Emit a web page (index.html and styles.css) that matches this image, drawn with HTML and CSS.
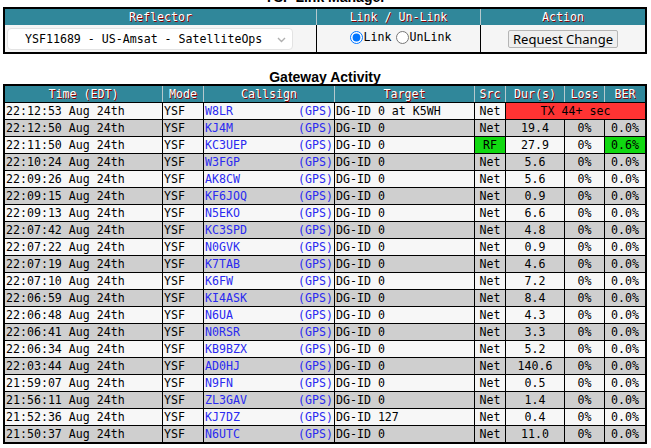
FILE: index.html
```html
<!DOCTYPE html>
<html>
<head>
<meta charset="utf-8">
<link rel="stylesheet" href="styles.css">
</head>
<body>
<div class="page">
  <div class="title title-top">YSF Link Manager</div>
  <table class="grid link-table">
    <thead>
      <tr>
        <th class="c-refl">Reflector</th>
        <th class="c-link">Link / Un-Link</th>
        <th class="c-act">Action</th>
      </tr>
    </thead>
    <tbody>
      <tr>
        <td class="refl-cell">
          <div class="select-wrap">
            <select class="refl-select"><option>YSF11689 - US-Amsat - SatelliteOps</option></select>
            <svg class="chev" width="9" height="6" viewBox="0 0 9 6"><path d="M1 1 L4.5 4.5 L8 1" fill="none" stroke="#b0b0b0" stroke-width="1.4"/></svg>
          </div>
        </td>
        <td class="center">
          <label class="radio"><input type="radio" name="lk" checked>Link</label><label class="radio"><input type="radio" name="lk">UnLink</label>
        </td>
        <td class="center"><button class="btn">Request Change</button></td>
      </tr>
    </tbody>
  </table>

  <div class="title title-gw">Gateway Activity</div>
  <table class="grid gw-table">
    <thead>
      <tr>
        <th class="w-time">Time (EDT)</th>
        <th class="w-mode">Mode</th>
        <th class="w-call">Callsign</th>
        <th class="w-tgt">Target</th>
        <th class="w-src">Src</th>
        <th class="w-dur">Dur(s)</th>
        <th class="w-loss">Loss</th>
        <th class="w-ber">BER</th>
      </tr>
    </thead>
    <tbody>
      <tr class="odd"><td>22:12:53 Aug 24th</td><td>YSF</td><td class="call"><span class="gps">(GPS)</span>W8LR</td><td>DG-ID 0 at K5WH</td><td class="center">Net</td><td class="center red" colspan="3">TX 44+ sec</td></tr>
      <tr class="even"><td>22:12:50 Aug 24th</td><td>YSF</td><td class="call"><span class="gps">(GPS)</span>KJ4M</td><td>DG-ID 0</td><td class="center">Net</td><td class="center">19.4</td><td class="center">0%</td><td class="center">0.0%</td></tr>
      <tr class="odd"><td>22:11:50 Aug 24th</td><td>YSF</td><td class="call"><span class="gps">(GPS)</span>KC3UEP</td><td>DG-ID 0</td><td class="center green">RF</td><td class="center">27.9</td><td class="center">0%</td><td class="center green">0.6%</td></tr>
      <tr class="even"><td>22:10:24 Aug 24th</td><td>YSF</td><td class="call"><span class="gps">(GPS)</span>W3FGP</td><td>DG-ID 0</td><td class="center">Net</td><td class="center">5.6</td><td class="center">0%</td><td class="center">0.0%</td></tr>
      <tr class="odd"><td>22:09:26 Aug 24th</td><td>YSF</td><td class="call"><span class="gps">(GPS)</span>AK8CW</td><td>DG-ID 0</td><td class="center">Net</td><td class="center">5.6</td><td class="center">0%</td><td class="center">0.0%</td></tr>
      <tr class="even"><td>22:09:15 Aug 24th</td><td>YSF</td><td class="call"><span class="gps">(GPS)</span>KF6JOQ</td><td>DG-ID 0</td><td class="center">Net</td><td class="center">0.9</td><td class="center">0%</td><td class="center">0.0%</td></tr>
      <tr class="odd"><td>22:09:13 Aug 24th</td><td>YSF</td><td class="call"><span class="gps">(GPS)</span>N5EKO</td><td>DG-ID 0</td><td class="center">Net</td><td class="center">6.6</td><td class="center">0%</td><td class="center">0.0%</td></tr>
      <tr class="even"><td>22:07:42 Aug 24th</td><td>YSF</td><td class="call"><span class="gps">(GPS)</span>KC3SPD</td><td>DG-ID 0</td><td class="center">Net</td><td class="center">4.8</td><td class="center">0%</td><td class="center">0.0%</td></tr>
      <tr class="odd"><td>22:07:22 Aug 24th</td><td>YSF</td><td class="call"><span class="gps">(GPS)</span>N0GVK</td><td>DG-ID 0</td><td class="center">Net</td><td class="center">0.9</td><td class="center">0%</td><td class="center">0.0%</td></tr>
      <tr class="even"><td>22:07:19 Aug 24th</td><td>YSF</td><td class="call"><span class="gps">(GPS)</span>K7TAB</td><td>DG-ID 0</td><td class="center">Net</td><td class="center">4.6</td><td class="center">0%</td><td class="center">0.0%</td></tr>
      <tr class="odd"><td>22:07:10 Aug 24th</td><td>YSF</td><td class="call"><span class="gps">(GPS)</span>K6FW</td><td>DG-ID 0</td><td class="center">Net</td><td class="center">7.2</td><td class="center">0%</td><td class="center">0.0%</td></tr>
      <tr class="even"><td>22:06:59 Aug 24th</td><td>YSF</td><td class="call"><span class="gps">(GPS)</span>KI4ASK</td><td>DG-ID 0</td><td class="center">Net</td><td class="center">8.4</td><td class="center">0%</td><td class="center">0.0%</td></tr>
      <tr class="odd"><td>22:06:48 Aug 24th</td><td>YSF</td><td class="call"><span class="gps">(GPS)</span>N6UA</td><td>DG-ID 0</td><td class="center">Net</td><td class="center">4.3</td><td class="center">0%</td><td class="center">0.0%</td></tr>
      <tr class="even"><td>22:06:41 Aug 24th</td><td>YSF</td><td class="call"><span class="gps">(GPS)</span>N0RSR</td><td>DG-ID 0</td><td class="center">Net</td><td class="center">3.3</td><td class="center">0%</td><td class="center">0.0%</td></tr>
      <tr class="odd"><td>22:06:34 Aug 24th</td><td>YSF</td><td class="call"><span class="gps">(GPS)</span>KB9BZX</td><td>DG-ID 0</td><td class="center">Net</td><td class="center">5.2</td><td class="center">0%</td><td class="center">0.0%</td></tr>
      <tr class="even"><td>22:03:44 Aug 24th</td><td>YSF</td><td class="call"><span class="gps">(GPS)</span>AD0HJ</td><td>DG-ID 0</td><td class="center">Net</td><td class="center">140.6</td><td class="center">0%</td><td class="center">0.0%</td></tr>
      <tr class="odd"><td>21:59:07 Aug 24th</td><td>YSF</td><td class="call"><span class="gps">(GPS)</span>N9FN</td><td>DG-ID 0</td><td class="center">Net</td><td class="center">0.5</td><td class="center">0%</td><td class="center">0.0%</td></tr>
      <tr class="even"><td>21:56:11 Aug 24th</td><td>YSF</td><td class="call"><span class="gps">(GPS)</span>ZL3GAV</td><td>DG-ID 0</td><td class="center">Net</td><td class="center">1.4</td><td class="center">0%</td><td class="center">0.0%</td></tr>
      <tr class="odd"><td>21:52:36 Aug 24th</td><td>YSF</td><td class="call"><span class="gps">(GPS)</span>KJ7DZ</td><td>DG-ID 127</td><td class="center">Net</td><td class="center">0.4</td><td class="center">0%</td><td class="center">0.0%</td></tr>
      <tr class="even"><td>21:50:37 Aug 24th</td><td>YSF</td><td class="call"><span class="gps">(GPS)</span>N6UTC</td><td>DG-ID 0</td><td class="center">Net</td><td class="center">11.0</td><td class="center">0%</td><td class="center">0.0%</td></tr>
    </tbody>
  </table>
</div>
</body>
</html>
```

FILE: styles.css
```css
html, body {
  margin: 0;
  padding: 0;
  background: #ffffff;
}

.page {
  padding: 0 4px 0 3px;
  overflow: hidden;
  height: 448px;
}

.title {
  font-family: "Liberation Sans", Arial, sans-serif;
  font-weight: bold;
  font-size: 14px;
  line-height: 16px;
  text-align: center;
  color: #000;
}

.title-top {
  margin-top: -11px;
  margin-bottom: 2px;
}

.title-gw {
  margin-top: 15px;
  margin-bottom: -1px;
}

.grid {
  width: 644px;
  border: 2px solid #000;
  border-collapse: separate;
  border-spacing: 0;
  table-layout: fixed;
  font-family: "DejaVu Sans Mono", "Liberation Mono", monospace;
  font-size: 11.6px;
  color: #000;
}

.grid th {
  box-sizing: border-box;
  height: 16px;
  padding: 0;
  background: #30879a;
  color: #ffffff;
  text-shadow: 1px 1px #8b0000;
  font-weight: normal;
  text-align: center;
  line-height: 15px;
  border-left: 1px solid #b6c9ce;
}

.grid th:first-child {
  border-left: none;
}

.grid td {
  box-sizing: border-box;
  padding: 0 0 0 1px;
  height: 17px;
  line-height: 15px;
  border-left: 1px solid #000;
  border-top: 1px solid #000;
  white-space: nowrap;
  overflow: hidden;
}

.grid td:first-child {
  border-left: none;
}

.grid td.center {
  text-align: center;
  padding: 0;
}

/* link manager */
.c-refl { width: 311px; }
.c-link { width: 164px; }
.c-act { width: 165px; }

.link-table td {
  height: 27px;
  border-top: none;
  background: #f5f5f5;
  vertical-align: middle;
}

.link-table td.refl-cell {
  padding: 0 0 0 2px;
}

.select-wrap {
  position: relative;
  width: 286px;
  height: 22px;
}

.refl-select {
  appearance: none;
  -webkit-appearance: none;
  box-sizing: border-box;
  width: 286px;
  height: 22px;
  margin: 0;
  padding: 0 0 0 17px;
  border: 1px solid #e3e3e3;
  border-radius: 4px;
  background: #ffffff;
  font-family: "DejaVu Sans Mono", "Liberation Mono", monospace;
  font-size: 11.6px;
  color: #000;
  outline: none;
}

.chev {
  position: absolute;
  left: 270px;
  top: 9px;
}

.radio {
  display: inline-flex;
  align-items: center;
  font-family: "DejaVu Sans Mono", "Liberation Mono", monospace;
  font-size: 11.6px;
}

.radio input {
  margin: 0 1px 0 4px;
  width: 13px;
  height: 13px;
}

.btn {
  font-family: "Noto Sans", "Open Sans", sans-serif;
  font-size: 13px;
  line-height: 15px;
  height: 18px;
  margin-top: 1px;
  padding: 0 4px;
  border: 1px solid #b5b5b5;
  border-radius: 2px;
  background: #efefef;
  color: #000;
}

/* gateway activity */
.w-time { width: 157px; }
.w-mode { width: 41px; }
.w-call { width: 131px; }
.w-tgt { width: 140px; }
.w-src { width: 31px; }
.w-dur { width: 59px; }
.w-loss { width: 40px; }
.w-ber { width: 41px; }

.odd td { background: #f7f7f7; }
.even td { background: #cfcfcf; }

.grid td.call {
  color: #2a2af0;
  padding-right: 1px;
}

.gps {
  float: right;
}

.grid td.red {
  background: #ff3333;
}

.grid td.green {
  background: #11d811;
}
```
